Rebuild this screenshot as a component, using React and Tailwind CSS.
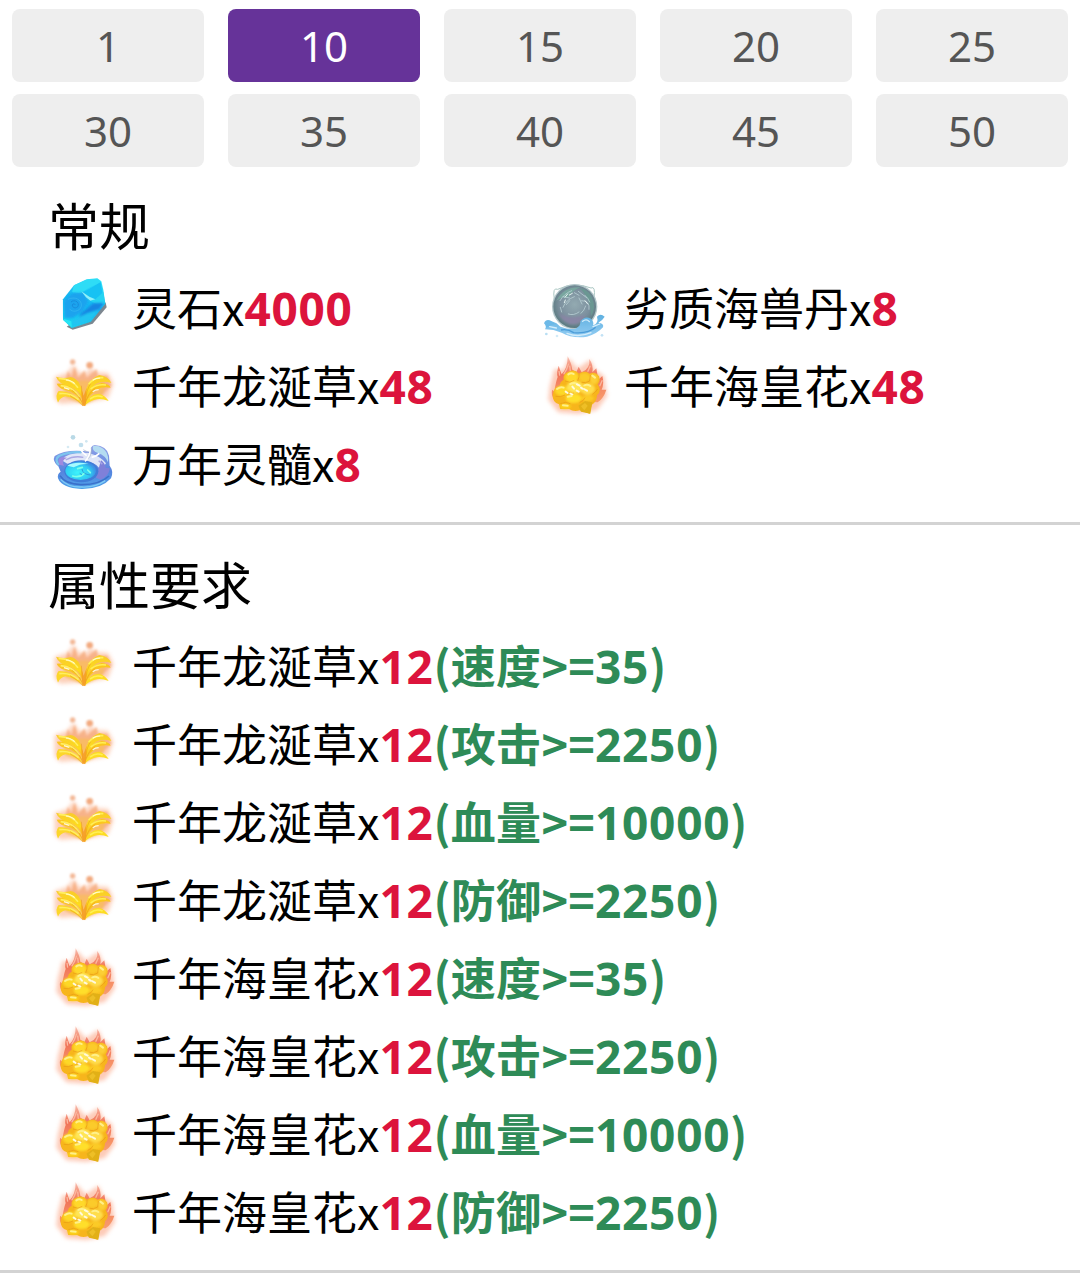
import React from 'react';

const levels = [1, 10, 15, 20, 25, 30, 35, 40, 45, 50];
const activeLevel = 10;

const materials = [
  { icon: SpiritStone, name: '灵石', count: 4000 },
  { icon: BeastPill, name: '劣质海兽丹', count: 8 },
  { icon: DragonGrass, name: '千年龙涎草', count: 48 },
  { icon: SeaFlower, name: '千年海皇花', count: 48 },
  { icon: SpiritMarrow, name: '万年灵髓', count: 8 },
];

const requirements = [
  { icon: DragonGrass, name: '千年龙涎草', count: 12, stat: '速度', min: 35 },
  { icon: DragonGrass, name: '千年龙涎草', count: 12, stat: '攻击', min: 2250 },
  { icon: DragonGrass, name: '千年龙涎草', count: 12, stat: '血量', min: 10000 },
  { icon: DragonGrass, name: '千年龙涎草', count: 12, stat: '防御', min: 2250 },
  { icon: SeaFlower, name: '千年海皇花', count: 12, stat: '速度', min: 35 },
  { icon: SeaFlower, name: '千年海皇花', count: 12, stat: '攻击', min: 2250 },
  { icon: SeaFlower, name: '千年海皇花', count: 12, stat: '血量', min: 10000 },
  { icon: SeaFlower, name: '千年海皇花', count: 12, stat: '防御', min: 2250 },
];

// gradients and filters shared by all item icons
function IconDefs() {
  return (
    <svg className="absolute w-0 h-0" aria-hidden="true">
      <defs>
        <filter id="soft" x="-20%" y="-20%" width="140%" height="140%">
          <feGaussianBlur stdDeviation="1.6" />
        </filter>
        <filter id="haze" x="-20%" y="-20%" width="140%" height="140%">
          <feGaussianBlur stdDeviation="3" />
        </filter>
        <filter id="glow" x="-40%" y="-40%" width="180%" height="180%">
          <feGaussianBlur stdDeviation="7" />
        </filter>
        <linearGradient id="stone" x1="0.7" y1="0" x2="0.3" y2="1">
          <stop offset="0" stopColor="#2ee3f8" />
          <stop offset="0.5" stopColor="#16b4f2" />
          <stop offset="1" stopColor="#14d3f0" />
        </linearGradient>
        <radialGradient id="pill" cx="0.5" cy="0.45" r="0.55">
          <stop offset="0" stopColor="#93aab1" />
          <stop offset="0.65" stopColor="#7c909e" />
          <stop offset="1" stopColor="#5b7a80" />
        </radialGradient>
        <linearGradient id="wave" x1="0" y1="0" x2="0" y2="1">
          <stop offset="0" stopColor="#5fb0e0" />
          <stop offset="1" stopColor="#93cdf3" />
        </linearGradient>
        <linearGradient id="leaf" x1="0" y1="0" x2="0" y2="1">
          <stop offset="0" stopColor="#f9ca2c" />
          <stop offset="0.5" stopColor="#fddc1c" />
          <stop offset="1" stopColor="#f5a518" />
        </linearGradient>
        <linearGradient id="flame" x1="0" y1="0" x2="0" y2="1">
          <stop offset="0" stopColor="#f08a72" stopOpacity="0.5" />
          <stop offset="0.4" stopColor="#ef6a4e" stopOpacity="0.9" />
          <stop offset="1" stopColor="#f7925a" stopOpacity="0.8" />
        </linearGradient>
        <linearGradient id="bowl" x1="0" y1="0" x2="0" y2="1">
          <stop offset="0" stopColor="#94a2e8" />
          <stop offset="0.6" stopColor="#5684de" />
          <stop offset="1" stopColor="#4fa4ea" />
        </linearGradient>
        <radialGradient id="pool" cx="0.4" cy="0.6" r="0.6">
          <stop offset="0" stopColor="#3cf3fb" />
          <stop offset="0.7" stopColor="#2fc9f2" />
          <stop offset="1" stopColor="#3c8fe4" />
        </radialGradient>
      </defs>
    </svg>
  );
}

function SpiritStone() {
  return (
    <svg viewBox="24 0 216 234" className="w-[72px] h-[78px] shrink-0">
      <path d="M80 170 L98 179 L158 161 L200 112 L197 98 L186 92 Z" fill="#7d8790" filter="url(#soft)" />
      <g filter="url(#soft)">
        <path d="M69 88 L102 46 L140 28 L172 25 L184 34 L190 60 L196 101 L152 155 L95 174 L69 149 Z" fill="url(#stone)" />
        <path d="M102 46 L140 29 L172 26 L182 36 L150 52 L122 70 L96 67 Z" fill="#2fdcf6" />
        <path d="M132 66 L182 36 L188 74 L166 88 L148 84 Z" fill="#18c2f3" />
        <path d="M168 86 L190 66 L195 100 L174 106 L151 92 Z" fill="#26d4f2" />
      </g>
      <g filter="url(#haze)">
        <path d="M72 92 L98 70 L130 68 L144 94 L128 124 L98 144 L74 144 Z" fill="#1ba3ee" />
        <path d="M122 132 L160 100 L192 98 L178 118 L140 130 L112 150 Z" fill="#1585e2" />
        <path d="M98 150 L132 134 L176 120 L152 152 L96 171 Z" fill="#21c4f1" />
      </g>
      <g filter="url(#soft)">
        <path d="M124 64 L148 80 L166 88 L151 92 L138 82 Z" fill="#91f0f8" />
        <path d="M72 147 L94 154 L95 172 L70 150 Z" fill="#28e4f4" />
        <path d="M93 96 C102 88 116 94 115 106 C113 117 96 115 97 105 C98 100 105 100 106 105" fill="none" stroke="#1783d4" strokeWidth="3" opacity="0.7" />
        <path d="M84 88 C104 78 126 88 124 108 C120 126 96 128 88 116" fill="none" stroke="#3bbcf2" strokeWidth="2.5" opacity="0.7" />
      </g>
    </svg>
  );
}

function BeastPill() {
  return (
    <svg viewBox="15 0 216 234" className="w-[72px] h-[78px] shrink-0">
      <g filter="url(#soft)">
        <path d="M58 88 Q52 50 68 58 Q118 34 168 54 Q182 46 177 84" fill="none" stroke="#a9c6c2" strokeWidth="3" />
        <circle cx="119" cy="110" r="68" fill="#b3c6ca" />
        <circle cx="119" cy="110" r="64" fill="url(#pill)" />
        <path d="M64 92 Q86 50 136 52 Q112 62 98 82 Q80 80 64 92 Z" fill="#79a69f" />
        <path d="M136 54 Q168 62 176 98 Q180 122 168 138 Q170 96 136 54 Z" fill="#6b9792" />
      </g>
      <path d="M70 128 Q100 150 150 136 Q138 168 104 162 Q80 152 70 128 Z" fill="#8886a4" filter="url(#haze)" />
      <g filter="url(#soft)">
        <path d="M75 92 Q88 70 110 62 M84 80 L104 84 M84 112 Q92 90 118 80 M130 64 L156 84 M140 92 Q166 92 162 118 M150 76 Q160 84 164 96 M132 84 L141 102 M76 112 L80 126 M94 104 L104 92 M100 132 Q116 138 132 126 M118 68 L132 76 M152 108 Q148 122 138 130" fill="none" stroke="#c2dadd" strokeWidth="2.4" strokeLinecap="round" opacity="0.85" />
        <path d="M90 82 L98 72 M103 75 L112 70 M150 92 L158 102 M88 98 L91 90" stroke="#e4f2f0" strokeWidth="3" strokeLinecap="round" />
        <path d="M27 160 Q34 144 50 154 Q66 158 76 170 Q104 180 122 176 Q138 168 136 154 Q150 136 168 146 Q178 156 174 166 Q192 160 186 140 Q196 128 209 140 Q202 152 190 158 Q208 160 204 172 Q186 192 156 200 Q112 206 80 188 Q56 178 30 178 Q36 168 27 160 Z" fill="url(#wave)" />
        <path d="M30 156 Q46 148 60 162 Q46 164 34 174 Z" fill="#6cb9e8" />
        <path d="M78 180 Q98 176 116 188 Q160 192 182 172" fill="none" stroke="#4c9cd8" strokeWidth="4" />
        <path d="M96 190 Q130 204 168 188 M174 170 L194 162 M143 154 Q154 145 163 155 M44 170 L64 174" fill="none" stroke="#d4edfb" strokeWidth="4" strokeLinecap="round" />
        <circle cx="34" cy="192" r="4" fill="#b8def3" />
        <circle cx="66" cy="198" r="4" fill="#d2ebf8" />
        <circle cx="201" cy="196" r="4" fill="#c2e2f5" />
      </g>
    </svg>
  );
}

function DragonGrass() {
  return (
    <svg viewBox="24 9 216 234" className="w-[72px] h-[78px] shrink-0">
      <path d="M44 96 L82 84 L100 60 L116 82 L136 86 L152 68 L170 82 L204 84 L220 116 L204 160 L150 170 L60 176 L44 160 Z" fill="#fbb08a" opacity="0.6" filter="url(#glow)" />
      <g filter="url(#haze)">
        <circle cx="98" cy="51" r="8" fill="#f3b795" />
        <circle cx="149" cy="61" r="10" fill="#f2a97e" />
        <path d="M76 104 L84 78 L94 96 L104 64 L114 98 L134 76 L140 98 L170 72 L174 94 L202 92 L214 122 L186 150 L80 146 Z" fill="#f6a878" opacity="0.75" />
        <path d="M66 106 L196 108 L190 150 L134 180 L74 156 Z" fill="#f9bd5c" opacity="0.8" />
      </g>
      <g filter="url(#soft)">
        <path d="M130 182 Q106 158 76 154 Q60 158 54 173 Q44 150 56 138 Q104 138 130 182 Z" fill="#fcd62a" />
        <path d="M130 180 Q110 140 74 134 Q56 130 50 116 Q108 112 130 180 Z" fill="#fbc524" />
        <path d="M130 178 Q122 132 84 122 Q56 116 48 95 Q70 102 92 96 Q128 102 132 178 Z" fill="url(#leaf)" />
        <path d="M132 178 Q132 108 178 90 Q206 94 214 114 Q188 106 168 116 Q144 132 134 180 Z" fill="url(#leaf)" />
        <path d="M133 180 Q146 122 186 114 Q208 118 212 128 Q186 124 170 134 Q148 146 135 182 Z" fill="#fbc71c" />
        <path d="M134 182 Q146 146 178 146 Q196 152 206 168 Q182 158 164 164 Q146 168 134 182 Z" fill="#fddc22" />
        <path d="M56 100 Q96 102 114 128 M62 122 Q98 124 118 156 M58 146 Q92 142 116 164" fill="none" stroke="#ffef62" strokeWidth="5" />
        <path d="M146 118 Q162 96 190 98 M152 132 Q172 116 198 120 M150 162 Q168 148 188 156" fill="none" stroke="#ffef55" strokeWidth="5" />
        <path d="M78 105 Q94 106 104 116 M158 106 Q168 99 180 99" fill="none" stroke="#fffbd2" strokeWidth="3.5" />
        <path d="M88 133 L72 128 M158 140 Q166 134 176 134" fill="none" stroke="#fff6dc" strokeWidth="4" />
        <path d="M129 181 Q118 150 96 136 M131 180 Q126 150 124 122 M134 180 Q142 146 166 130 M136 176 Q138 134 152 116 M128 182 Q112 164 90 152" fill="none" stroke="#ea9a20" strokeWidth="2" opacity="0.85" />
        <path d="M124 132 L131 152 L140 128 L136 183 L127 182 Z" fill="#f59e28" opacity="0.9" />
      </g>
    </svg>
  );
}

function SeaFlower() {
  return (
    <svg viewBox="15 9 216 234" className="w-[72px] h-[78px] shrink-0">
      <path d="M44 126 L58 72 L86 74 L101 40 L128 70 L166 44 L180 74 L208 94 L216 154 L186 195 L130 207 L70 202 L40 164 Z" fill="#fb9670" opacity="0.5" filter="url(#glow)" />
      <g filter="url(#soft)">
        <path d="M58 140 Q62 112 68 96 Q64 82 71 62 Q76 78 80 88 Q98 70 98 34 Q110 56 112 74 L124 82 L131 65 L140 82 Q166 72 163 42 Q176 60 172 82 L184 70 L190 104 L202 93 Q208 116 200 134 L214 134 Q206 160 188 172 L60 166 Q46 150 52 134 Z" fill="url(#flame)" />
        <path d="M86 88 Q96 74 101 56 M106 78 L104 62 M158 80 L166 62 M74 92 L72 78 M194 124 L202 106" fill="none" stroke="#fbb79f" strokeWidth="4" />
        <path d="M86 104 Q82 86 102 80 Q118 70 132 86 Q150 74 164 86 Q180 78 192 94 Q197 108 188 118 Q202 136 186 151 Q186 170 170 180 L164 206 L134 196 Q116 202 102 192 L76 192 L72 178 Q52 172 53 150 Q56 126 74 124 Q74 110 86 104 Z" fill="#f7b51c" />
      </g>
      <g filter="url(#haze)">
        <ellipse cx="110" cy="96" rx="20" ry="16" fill="#ffd92a" />
        <ellipse cx="148" cy="97" rx="17" ry="14" fill="#fbcb2c" />
        <ellipse cx="177" cy="102" rx="13" ry="16" fill="#fccf34" />
        <ellipse cx="80" cy="137" rx="20" ry="15" fill="#fdd826" />
        <ellipse cx="120" cy="126" rx="25" ry="18" fill="#ffe656" />
        <ellipse cx="158" cy="132" rx="22" ry="17" fill="#ffdd4c" />
        <ellipse cx="116" cy="160" rx="24" ry="14" fill="#ffdf2c" />
        <ellipse cx="158" cy="160" rx="18" ry="10" fill="#fbcb26" />
        <ellipse cx="91" cy="184" rx="17" ry="8" fill="#fdd31a" />
      </g>
      <g filter="url(#soft)">
        <path d="M130 182 L150 168 L172 172 L166 206 L138 200 Z" fill="#e2b019" />
        <path d="M138 184 L150 174 L158 182 L148 196 Z" fill="#eebf28" />
        <path d="M90 108 Q104 116 118 106 M128 108 Q134 94 132 86 M140 112 Q152 116 164 108 L166 90 M62 154 Q76 158 90 150 M96 146 Q108 150 116 144 M76 176 Q92 168 106 176 M134 172 Q146 168 150 158 M172 148 Q182 142 188 132" fill="none" stroke="#e89a16" strokeWidth="2.5" opacity="0.8" />
        <path d="M100 88 Q108 82 116 87 M66 132 Q76 124 86 128 M106 117 Q118 110 128 118 M148 121 Q158 117 166 123 M98 155 L110 153 M172 92 L180 98 M84 181 L98 182" fill="none" stroke="#fff08a" strokeWidth="6" strokeLinecap="round" />
        <path d="M112 125 L117 131 M126 118 L134 122 M147 132 L156 137 M125 137 L131 140 M92 140 L98 144 M138 128 L142 131 M106 146 L112 148" stroke="#fff9df" strokeWidth="6" strokeLinecap="round" />
      </g>
    </svg>
  );
}

function SpiritMarrow() {
  return (
    <svg viewBox="24 3 216 234" className="w-[72px] h-[78px] shrink-0">
      <g filter="url(#soft)">
        <circle cx="99" cy="37" r="7" fill="#b9d9e6" />
        <circle cx="123" cy="60" r="7" fill="#c1dfed" />
        <circle cx="139" cy="49" r="4" fill="#cfe6f0" />
        <circle cx="84" cy="66" r="4" fill="#d6eaf3" />
        <path d="M55 124 Q36 108 44 93 Q78 70 151 80 Q150 63 164 60 Q202 63 207 92 L209 122 Q222 139 213 160 Q184 193 124 192 Q65 189 54 160 Q51 147 62 140 Z" fill="url(#bowl)" />
        <path d="M64 105 Q84 80 146 84 Q180 92 198 115 Q188 132 177 128 Q155 98 82 116 Z" fill="#dfe6f8" />
        <path d="M160 62 Q153 76 174 84 Q197 92 204 112 Q208 76 176 64 Z" fill="#b4dcf1" />
        <path d="M57 120 Q42 103 57 93 Q88 79 124 82" fill="none" stroke="#7cc4ee" strokeWidth="7" />
        <path d="M58 119 Q50 103 66 96 L81 98 Q62 106 72 122 Z" fill="#9d8adf" />
        <path d="M183 106 Q195 114 197 128 L209 130 Q207 154 182 164 L168 158 Z" fill="#7f80d9" />
        <ellipse cx="124" cy="139" rx="51" ry="33" fill="#3f7bd8" />
        <ellipse cx="122" cy="137" rx="46" ry="28" fill="url(#pool)" />
        <path d="M82 122 Q106 108 146 117 Q122 115 101 127 Z" fill="#a6faff" />
        <path d="M98 153 Q119 159 133 145 M113 131 L127 127 M143 135 L151 143" fill="none" stroke="#7cffe8" strokeWidth="5" strokeLinecap="round" />
        <path d="M126 132 Q128 148 151 150 M119 145 L126 149" fill="none" stroke="#2f9fdb" strokeWidth="3" />
        <path d="M60 152 Q75 177 122 179 Q178 180 207 153" fill="none" stroke="#3a6fca" strokeWidth="5" />
        <path d="M62 163 Q84 187 125 186 Q165 188 196 167" fill="none" stroke="#7fcbf6" strokeWidth="4" />
        <path d="M135 109 Q151 96 151 70 M140 92 Q126 83 120 70 M155 97 Q168 95 178 85" fill="none" stroke="#fff" strokeWidth="5" />
        <path d="M145 101 Q156 89 154 68 M145 82 L130 74" fill="none" stroke="#a8b5c5" strokeWidth="2" />
        <path d="M77 105 Q101 91 130 97 M176 107 L187 118" fill="none" stroke="#aaa8e4" strokeWidth="4" />
      </g>
    </svg>
  );
}

function Num({ children }) {
  return <span className="font-['Noto_Sans',sans-serif] text-[46px] leading-none tracking-[0.7px]">{children}</span>;
}

function ItemRow({ item }) {
  const Icon = item.icon;

  return (
    <li className="flex items-center h-[78px]">
      <Icon />
      <p className="pl-3 pb-[3px] text-[45px] leading-none whitespace-nowrap text-black">
        {item.name}x
        <span className="font-bold text-[#dc143c]">
          <Num>{item.count}</Num>
        </span>
        {item.stat && (
          <span className="font-bold tracking-[0.3px] text-[#2e8b57]">
            ({item.stat}&gt;=<Num>{item.min}</Num>)
          </span>
        )}
      </p>
    </li>
  );
}

export default function App() {
  return (
    <div className="w-full h-[1283px] overflow-hidden bg-white font-['Noto_Sans_CJK_SC',sans-serif]">
      <IconDefs />

      <div className="grid grid-cols-5 gap-x-6 gap-y-3 px-3 pt-[9px]">
        {levels.map((level) => (
          <button
            key={level}
            type="button"
            className={`h-[73px] rounded-lg font-['Noto_Sans',sans-serif] text-[42px] leading-none ${
              level === activeLevel ? 'bg-[#663399] text-white' : 'bg-[#eeeeee] text-[#555555]'
            }`}
          >
            {level}
          </button>
        ))}
      </div>

      <section className="px-12 pt-[23px] pb-[18px] border-b-[3px] border-[#d3d3d3]">
        <h2 className="h-20 text-[51px] leading-[69px] text-black">常规</h2>
        <ul className="grid grid-cols-2">
          {materials.map((item) => (
            <ItemRow key={item.name} item={item} />
          ))}
        </ul>
      </section>

      <section className="px-12 pt-6 pb-[18px] border-b-[3px] border-[#d3d3d3]">
        <h2 className="h-[79px] text-[51px] leading-[69px] text-black">属性要求</h2>
        <ul>
          {requirements.map((item) => (
            <ItemRow key={item.name + item.stat} item={item} />
          ))}
        </ul>
      </section>
    </div>
  );
}
